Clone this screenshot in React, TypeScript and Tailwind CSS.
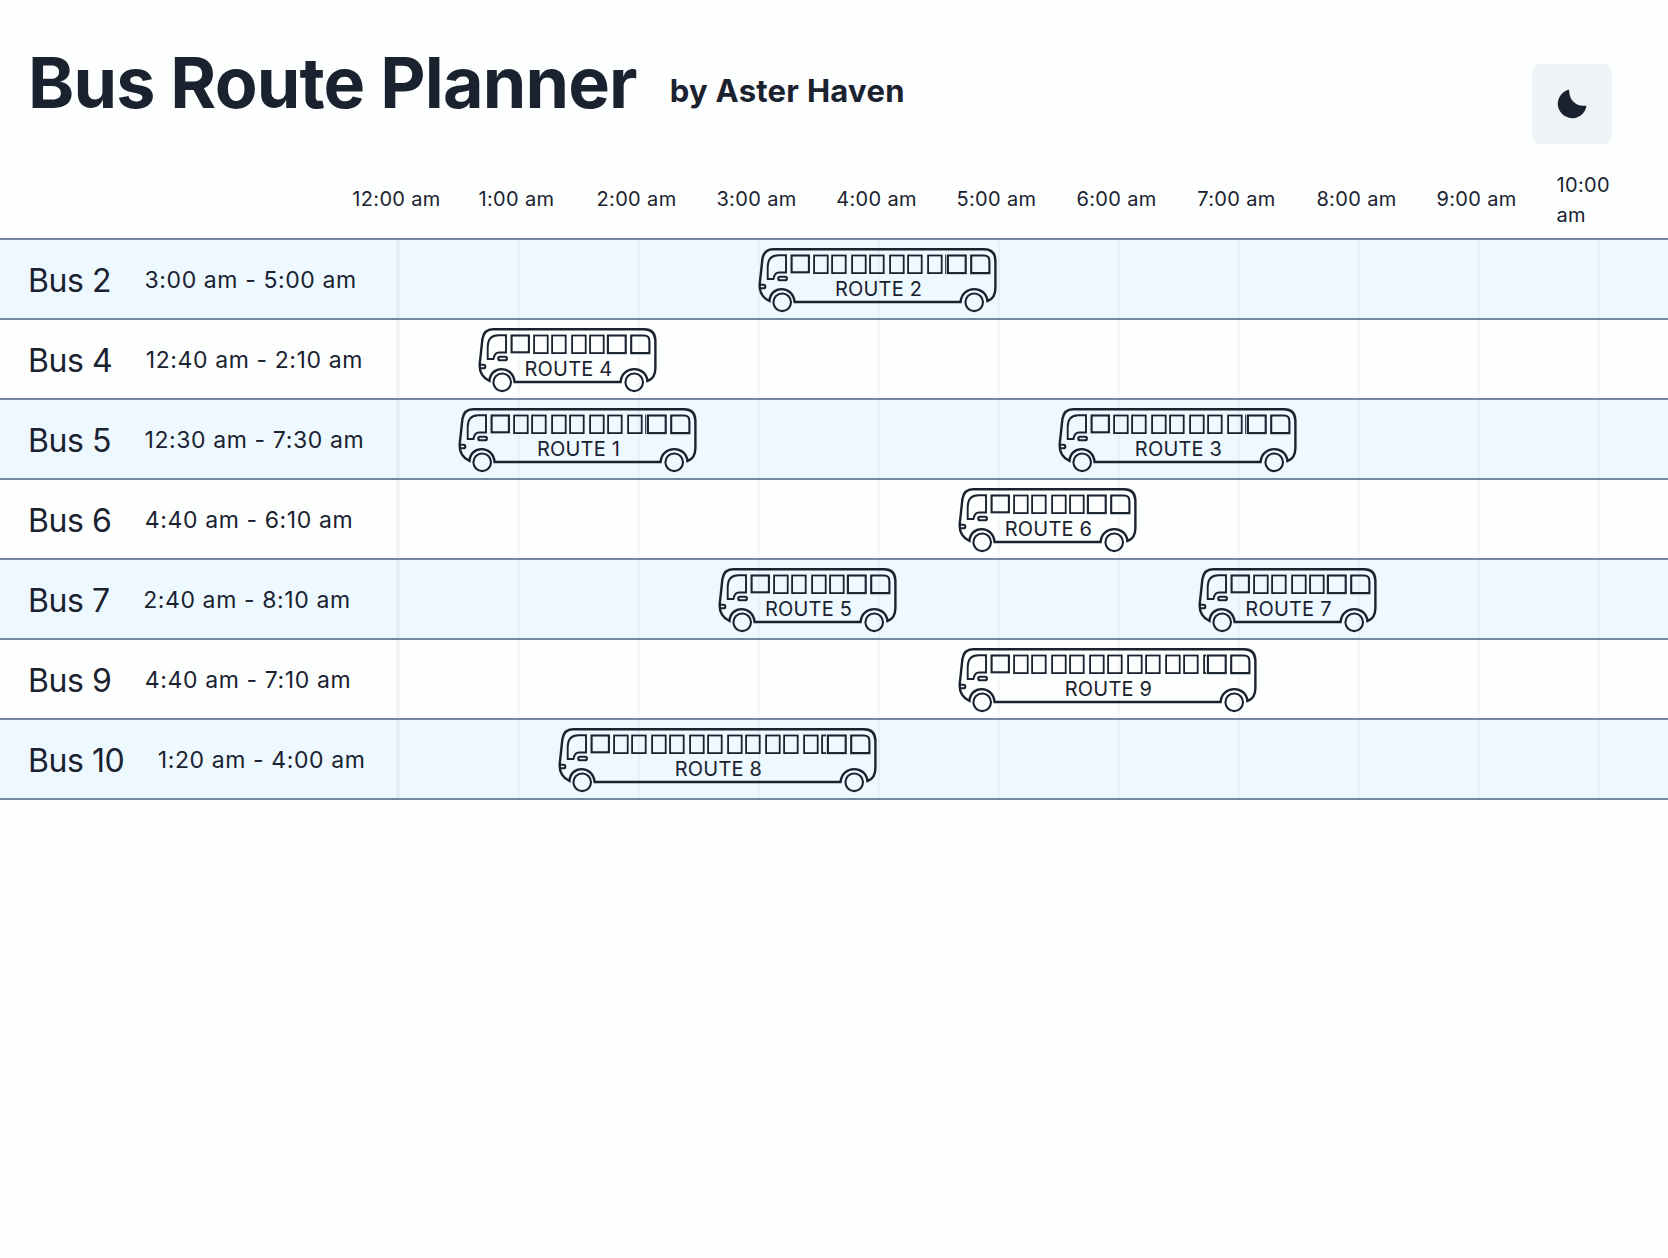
const INK = "#1a2230";

type Route = { name: string; start: number; duration: number };
type Bus = { name: string; time: string; routes: Route[] };

const buses: Bus[] = [
  { name: "Bus 2", time: "3:00 am - 5:00 am", routes: [{ name: "ROUTE 2", start: 360, duration: 240 }] },
  { name: "Bus 4", time: "12:40 am - 2:10 am", routes: [{ name: "ROUTE 4", start: 80, duration: 180 }] },
  {
    name: "Bus 5",
    time: "12:30 am - 7:30 am",
    routes: [
      { name: "ROUTE 1", start: 60, duration: 240 },
      { name: "ROUTE 3", start: 660, duration: 240 },
    ],
  },
  { name: "Bus 6", time: "4:40 am - 6:10 am", routes: [{ name: "ROUTE 6", start: 560, duration: 180 }] },
  {
    name: "Bus 7",
    time: "2:40 am - 8:10 am",
    routes: [
      { name: "ROUTE 5", start: 320, duration: 180 },
      { name: "ROUTE 7", start: 800, duration: 180 },
    ],
  },
  { name: "Bus 9", time: "4:40 am - 7:10 am", routes: [{ name: "ROUTE 9", start: 560, duration: 300 }] },
  { name: "Bus 10", time: "1:20 am - 4:00 am", routes: [{ name: "ROUTE 8", start: 160, duration: 320 }] },
];

const hours = ["12:00 am", "1:00 am", "2:00 am", "3:00 am", "4:00 am", "5:00 am", "6:00 am", "7:00 am", "8:00 am", "9:00 am"];

function BusDrawing({ route }: { route: Route }) {
  const w = route.duration;
  const tail = w - 51.8;
  const clipId = `mid-${route.name.replace(" ", "")}`;
  const windows: number[] = [];
  for (let i = 0; ; i++) {
    const x = 56.1 + Math.floor(i / 2) * 38 + (i % 2) * 18;
    if (x - 0.9 > tail) break;
    windows.push(x);
  }
  return (
    <div className="absolute top-0 h-[78px]" style={{ left: route.start, width: w }}>
      <svg width={w} height="78" viewBox={`0 0 ${w} 78`} fill="none" stroke={INK} strokeWidth="2.1" className="absolute inset-0">
        <defs>
          <clipPath id={clipId}>
            <rect x="50" y="0" width={tail - 50} height="78" />
          </clipPath>
        </defs>
        <path
          d={`M11.5 61 Q1.6 56.5 1.6 45 L4.4 19 Q6 9.2 15 9.2 H${w - 14} Q${w - 2.6} 9.2 ${w - 2.6} 21 V48 Q${w - 2.6} 58.5 ${w - 10.6} 61 C${w - 12} 45 ${w - 36} 45 ${w - 37.4} 62 H36.6 C35 45 12.5 45 11.5 61 Z`}
          strokeWidth="2.4"
        />
        <circle cx="24.2" cy="62.3" r="8.8" />
        <circle cx={w - 23.8} cy="62.3" r="8.8" />
        <path d="M28 15.3 V32.5 H21 Q16.5 32.5 15.5 39 H9.7 V27 Q9.7 15.3 20.5 15.3 Z" strokeWidth="1.9" />
        <rect x="20.3" y="36.7" width="8.6" height="3.6" rx="1.8" />
        <path d="M2 44.7 H5.5 Q7.3 44.7 7.3 46.5 T5.5 48.3 H2" />
        <rect x="33.6" y="15.5" width="17.3" height="16.8" />
        <g clipPath={`url(#${clipId})`} strokeWidth="1.8">
          {windows.map((x) => (
            <rect key={x} x={x} y="15.5" width="13.6" height="17.6" />
          ))}
        </g>
        <rect x={w - 50.1} y="15.5" width="17.8" height="17.6" />
        <path d={`M${w - 26.8} 15.5 H${w - 14} Q${w - 8.6} 15.5 ${w - 8.6} 21 V33.1 H${w - 26.8} Z`} />
      </svg>
      <span className="absolute right-0 left-px top-[37px] text-center text-[20px] leading-6 tracking-[0.2px]">{route.name}</span>
    </div>
  );
}

export default function App() {
  return (
    <div className="h-[1258px] w-[1668px] overflow-hidden bg-[#fdfefe] font-['Inter',sans-serif] text-[#1a2230]">
      <header className="flex h-[158px] items-start justify-between pt-16 pr-14 pl-7">
        <div className="-mt-4 flex items-baseline gap-[33px]">
          <h1 className="text-[70px] leading-[70px] font-bold tracking-[-0.83px]">Bus Route Planner</h1>
          <h2 className="text-[31px] leading-10 font-bold tracking-[0.28px]">
            <span className="relative -top-1.5">by Aster Haven</span>
          </h2>
        </div>
        <button className="flex size-20 items-center justify-center rounded-lg bg-[#eff3f7]" aria-label="Toggle theme">
          <svg width="32" height="32" viewBox="0 0 32 32">
            <path
              d="M11.4 2 Q13.2 1.2 13.3 3 C13 11.5 19.5 18.6 28.8 17.8 Q31 17.7 30.2 19.6 A14.5 14.5 0 1 1 11.4 2 Z"
              fill={INK}
            />
          </svg>
        </button>
      </header>
      <div className="flex h-20 items-center pt-0.5 pl-[336.5px] text-[20px] leading-[30px] tracking-[0.35px]">
        {hours.map((h) => (
          <div key={h} className="w-[120px] shrink-0 text-center whitespace-nowrap">{h}</div>
        ))}
        <div className="ml-5 w-[60px] pt-px">10:00 am</div>
      </div>
      <main className="border-t-2 border-[#7586a0]">
        {buses.map((bus) => (
          <section key={bus.name} className="flex h-20 border-b-2 border-[#7586a0] odd:bg-[#edf8ff]">
            <div className="flex w-[396px] shrink-0 items-center gap-[33.5px] pl-7 whitespace-nowrap">
              <span className="pt-1 text-[32px] leading-10 tracking-[-0.45px]">{bus.name}</span>
              <span className="pt-0.5 text-[23px] leading-9 tracking-[0.6px]">{bus.time}</span>
            </div>
            <div className="relative flex">
              <div className="w-[122px] shrink-0 border-l-4 border-[#718096]/8" />
              {hours.map((h) => (
                <div key={h} className="w-[120px] shrink-0 border-l-2 border-[#718096]/7" />
              ))}
              <div className="absolute inset-y-0 left-0.5">
                {bus.routes.map((r) => (
                  <BusDrawing key={r.name} route={r} />
                ))}
              </div>
            </div>
          </section>
        ))}
      </main>
    </div>
  );
}
